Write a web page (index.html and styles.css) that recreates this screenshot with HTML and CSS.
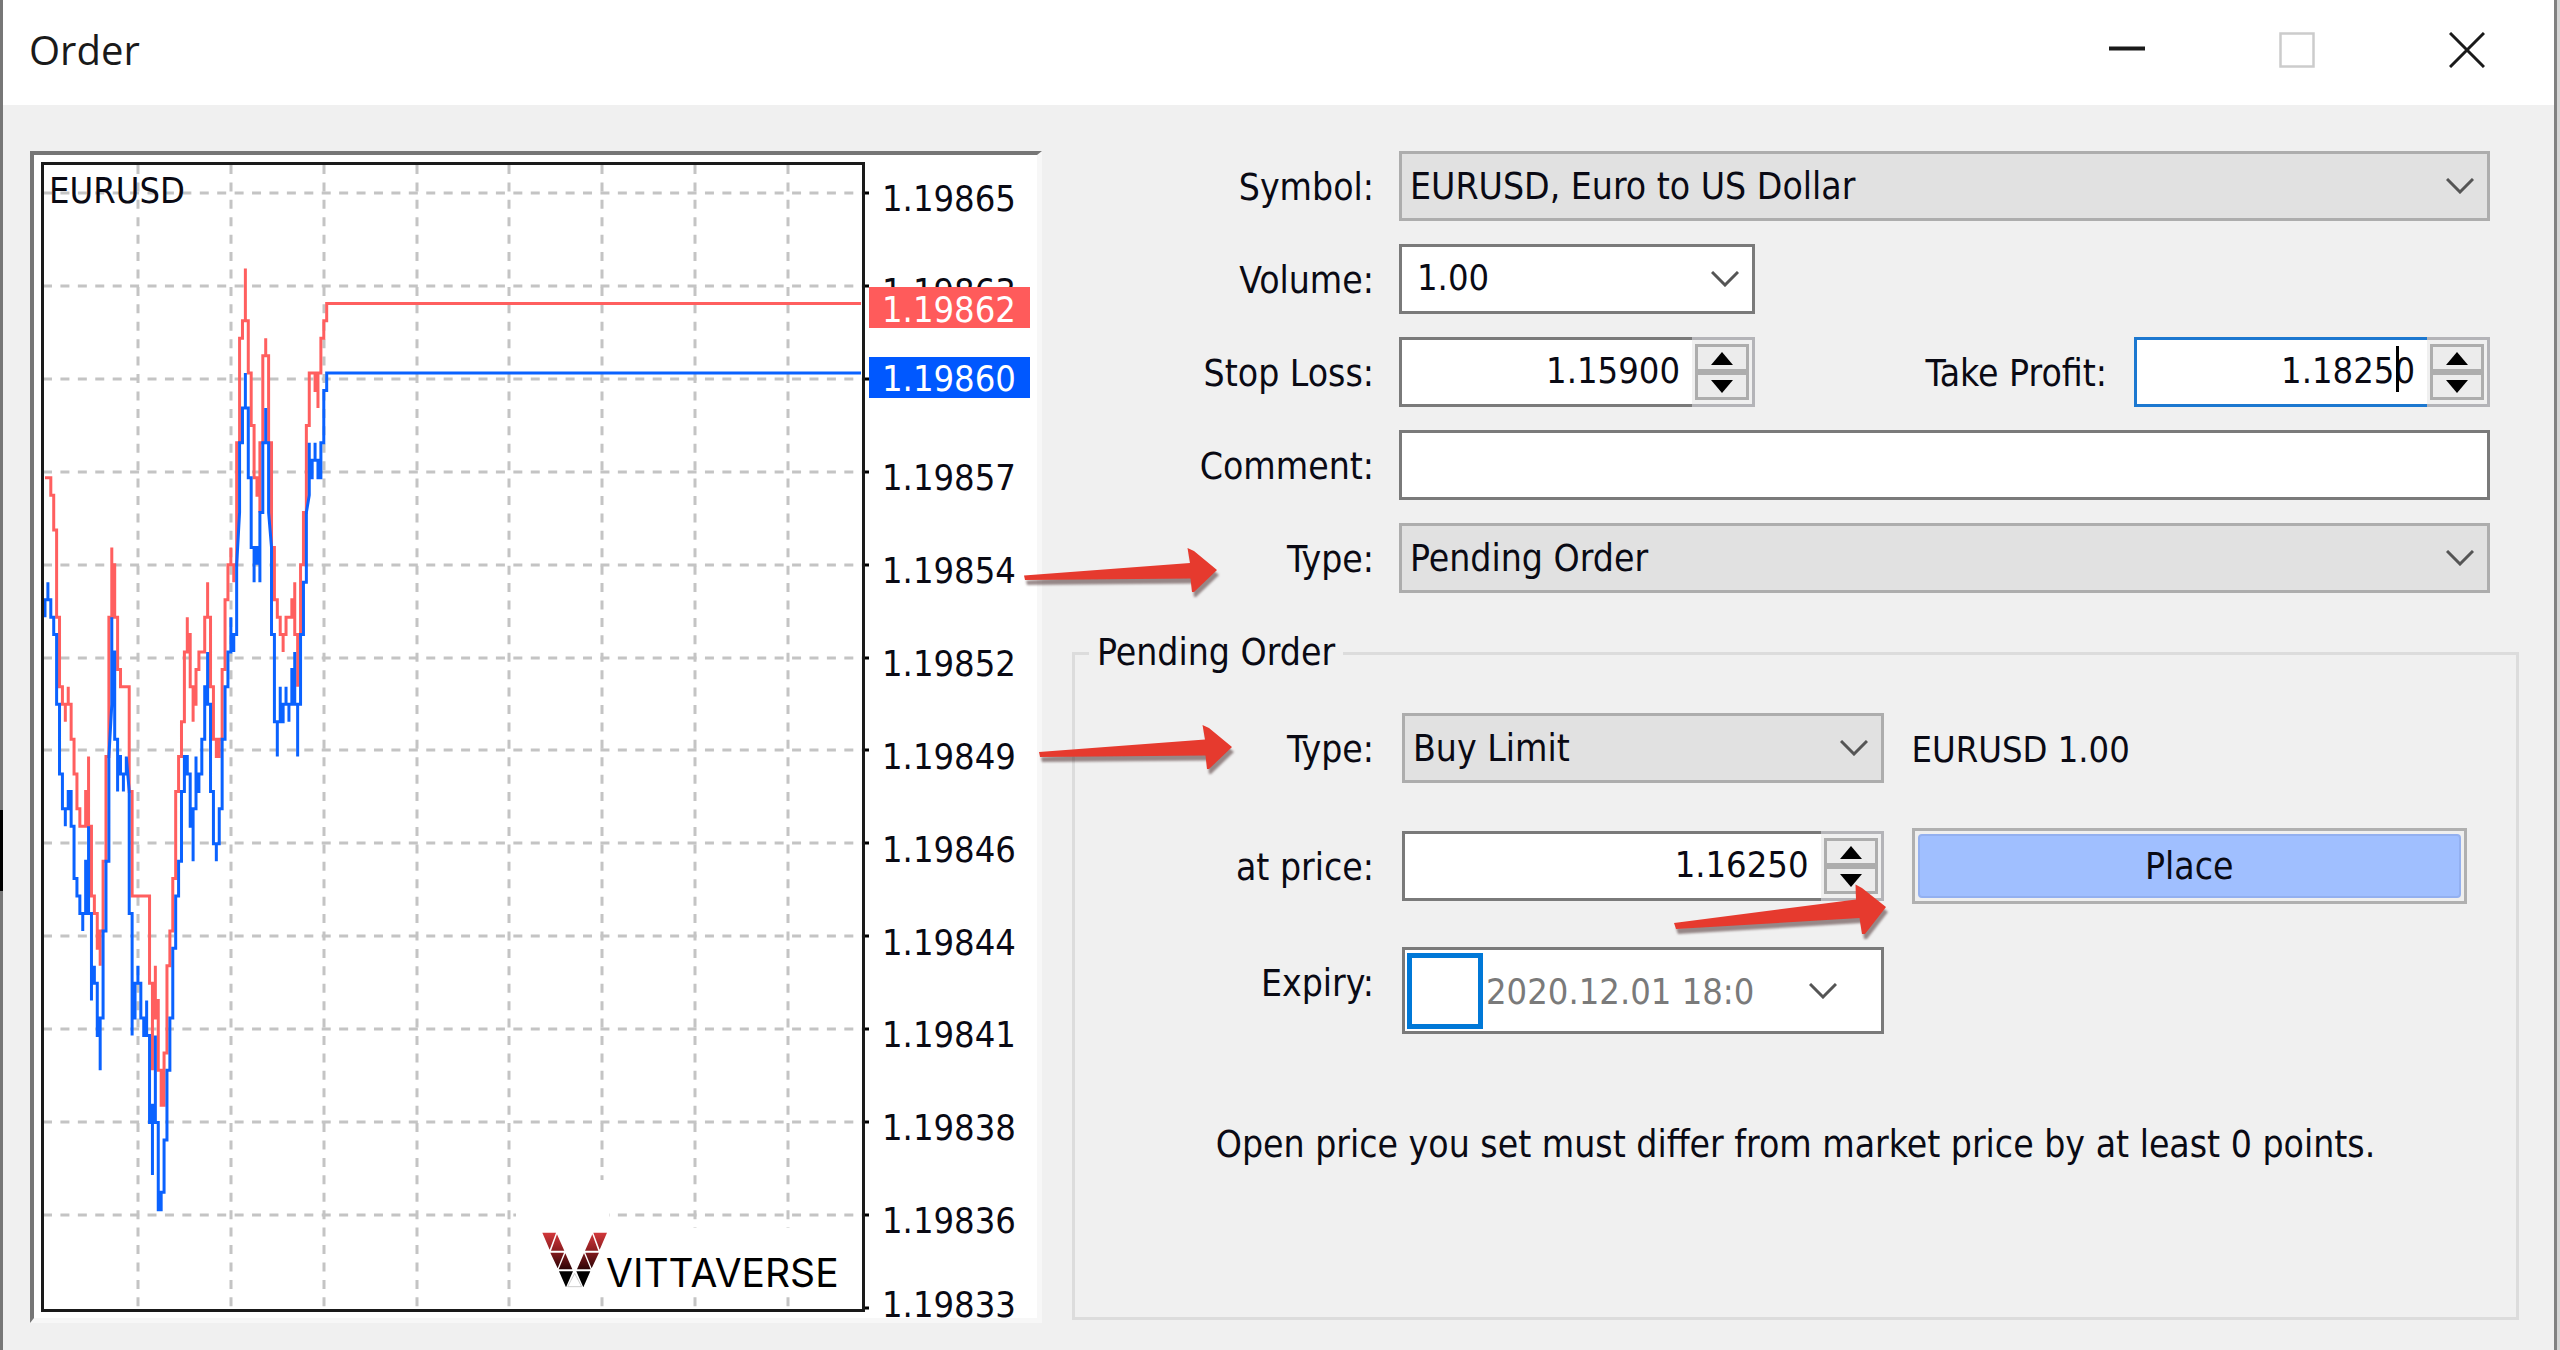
FILE: index.html
```html
<!DOCTYPE html>
<html lang="en">
<head>
<meta charset="utf-8">
<title>Order</title>
<link rel="stylesheet" href="styles.css">
</head>
<body>
<div class="window">
  <header class="titlebar">
    <h1 class="titlebar-text">Order</h1>
    <div class="titlebar-buttons">
      <button class="titlebar-button" type="button" aria-label="Minimize">
        <svg width="36" height="36" viewBox="0 0 36 36"><path d="M0 16.500H36" stroke="#1a1a1a" stroke-width="4"/></svg>
      </button>
      <button class="titlebar-button" type="button" aria-label="Maximize" disabled>
        <svg width="36" height="36" viewBox="0 0 36 36"><rect x="1.500" y="1.500" width="33" height="33" fill="none" stroke="#cccccc" stroke-width="2.500"/></svg>
      </button>
      <button class="titlebar-button" type="button" aria-label="Close">
        <svg width="36" height="36" viewBox="0 0 36 36"><path d="M1 1L35 35M35 1L1 35" stroke="#1a1a1a" stroke-width="3"/></svg>
      </button>
    </div>
  </header>

  <main class="content">
    <section class="chart-panel" aria-label="EURUSD tick chart">
      <svg class="chart" viewBox="34 155 1003 1163">
        <g class="grid-lines">
          <path d="M43 193H863M43 286H863M43 379H863M43 472H863M43 565H863M43 658H863M43 750H863M43 843H863M43 936H863M43 1029H863M43 1122H863M43 1215H863"/>
          <path d="M138 165V1309M231 165V1309M324 165V1309M417 165V1309M509 165V1309M602 165V1309M695 165V1309M788 165V1309"/>
        </g>
        <path d="M516 1180H609V1228H845V1296H516Z" fill="#fff"/>
        <path d="M863 193H869M863 286H869M863 379H869M863 472H869M863 565H869M863 658H869M863 750H869M863 843H869M863 936H869M863 1029H869M863 1122H869M863 1215H869M863 1308H869" stroke="#000" stroke-width="3"/>
        <!-- one x unit per tick, one y unit per half point -->
        <g class="ticks" transform="translate(45 477.700) scale(2.904 17.430)">
          <polyline class="ask" points="0,0 2,0 2,1 3,1 3,3 4,3 4,8 5,8 5,12 6,12 6,13 7,13 7,14 7,13 8,13 8,12 8,13 9,13 9,15 10,15 10,17 11,17 11,19 12,19 12,20 14,20 14,18 15,18 15,16 15,20 16,20 16,24 17,24 17,25 18,25 18,27 19,27 19,28 19,26 20,26 20,22 21,22 21,16 22,16 22,8 23,8 23,4 23,5 24,5 24,8 25,8 25,11 26,11 26,12 29,12 29,18 30,18 30,24 36,24 36,29 37,29 37,34 37,31 38,31 38,28 38,30 39,30 39,34 40,34 40,36 41,36 41,33 42,33 42,28 43,28 43,26 44,26 44,23 45,23 45,18 46,18 46,16 47,16 47,14 48,14 48,10 49,10 49,8 49,9 50,9 50,12 51,12 51,14 51,13 52,13 52,11 53,11 53,10 55,10 55,8 56,8 56,6 56,8 57,8 57,12 58,12 58,15 59,15 59,16 60,16 60,15 61,15 61,11 62,11 62,7 63,7 63,5 64,5 64,4 64,5 65,5 65,6 65,5 66,5 66,-2 67,-2 67,-8 68,-8 68,-9 69,-9 69,-12 69,-9 70,-9 70,-6 71,-6 71,-3 72,-3 72,0 73,0 73,1 74,1 74,2 74,-2 75,-2 75,-7 76,-7 76,-8 76,-7 77,-7 77,-2 78,-2 78,4 79,4 79,7 80,7 80,8 81,8 81,9 82,9 82,10 82,9 83,9 83,8 85,8 85,7 86,7 86,6 86,9 87,9 87,12 87,9 88,9 88,5 89,5 89,2 90,2 90,-3 91,-3 91,-6 93,-6 93,-5 94,-5 94,-4 94,-6 95,-6 95,-8 96,-8 96,-9 97,-9 97,-10 281,-10"/>
          <polyline class="bid" points="0,8 0,7 1,7 1,6 1,7 2,7 2,8 3,8 3,9 4,9 4,13 5,13 5,17 6,17 6,19 7,19 7,20 7,19 8,19 8,18 9,18 9,20 10,20 10,23 11,23 11,24 12,24 12,25 13,25 13,26 13,25 14,25 14,22 15,22 15,20 15,25 16,25 16,30 16,29 17,29 17,28 17,29 18,29 18,32 19,32 19,34 19,31 20,31 20,26 21,26 21,22 22,22 22,16 23,13 23,8 23,10 24,10 24,15 25,15 25,18 25,16 26,16 26,17 27,17 27,18 27,17 28,17 28,16 29,18 29,25 30,25 30,32 30,31 31,31 31,29 32,29 32,28 32,29 33,29 33,31 34,31 34,32 35,32 35,30 35,32 36,32 36,37 37,37 37,40 37,36 38,36 38,32 38,37 39,37 39,42 40,42 40,41 41,41 41,38 42,38 42,34 43,34 43,31 44,31 44,27 45,27 45,24 46,24 46,22 47,22 47,18 48,18 48,16 49,16 49,17 50,17 50,20 51,20 51,22 51,19 52,19 52,16 52,18 53,18 53,17 54,17 54,15 55,15 55,12 56,12 56,10 56,13 57,13 57,18 58,18 58,21 59,21 59,22 59,21 60,21 60,19 61,19 61,15 62,15 62,12 63,12 63,10 64,10 64,8 64,9 65,9 65,10 65,9 66,9 66,5 67,2 67,-2 68,-2 68,-4 69,-4 69,-6 69,-4 70,-4 70,0 71,0 71,4 72,4 72,6 72,4 73,4 73,5 73,4 74,4 74,6 74,2 75,2 75,-2 76,-2 76,-4 76,-2 77,-2 77,2 78,4 78,9 79,9 79,14 80,14 80,16 80,14 81,14 81,12 81,14 82,14 82,13 83,13 83,12 83,13 84,13 84,14 84,13 85,13 85,11 86,11 86,10 86,13 87,13 87,16 87,13 88,13 88,9 89,9 89,6 90,6 90,2 91,1 91,-2 91,0 92,0 92,-1 93,-1 93,-2 93,-1 94,-1 94,0 95,0 95,-2 96,-2 96,-5 97,-5 97,-6 281,-6"/>
        </g>
        <rect x="42.500" y="163.500" width="821" height="1147" fill="none" stroke="#1a1a1a" stroke-width="3"/>
        <g class="chart-text">
          <text x="49" y="203">EURUSD</text>
          <text x="882" y="211">1.19865</text>
          <text x="882" y="304">1.19863</text>
          <text x="882" y="490">1.19857</text>
          <text x="882" y="583">1.19854</text>
          <text x="882" y="676">1.19852</text>
          <text x="882" y="769">1.19849</text>
          <text x="882" y="862">1.19846</text>
          <text x="882" y="955">1.19844</text>
          <text x="882" y="1047">1.19841</text>
          <text x="882" y="1140">1.19838</text>
          <text x="882" y="1233">1.19836</text>
          <text x="882" y="1317">1.19833</text>
          <rect x="869" y="287" width="161" height="41" fill="#ff5b5b"/>
          <text class="tag-text" x="882" y="322">1.19862</text>
          <rect x="869" y="357" width="161" height="41" fill="#0058ff"/>
          <text class="tag-text" x="882" y="391">1.19860</text>
        </g>
        <defs>
          <linearGradient id="brand" gradientUnits="userSpaceOnUse" x1="0" y1="38" x2="0" y2="200">
            <stop offset="0" stop-color="#d2383b"/>
            <stop offset=".33" stop-color="#8c1d20"/>
            <stop offset=".68" stop-color="#2c0406"/>
            <stop offset=".72" stop-color="#000"/>
          </linearGradient>
        </defs>
        <g transform="translate(530 1220) scale(.3333)">
          <path fill="url(#brand)" d="M37 38H78L59 89ZM81 43L103 92H63ZM61 98H102L83 145ZM106 100L127 148H86ZM87 154H129L108 202ZM231 38H190L209 89ZM187 43L165 92H205ZM207 98H166L185 145ZM162 100L141 148H182ZM181 154H139L160 202Z"/>
          <path fill="#fff" stroke="#ccc" stroke-width="3" d="M134 160L113 200H155Z"/>
        </g>
        <text class="brand-text" x="606" y="1287">VITTAVERSE</text>
      </svg>
    </section>

    <form class="order-form">
      <div class="fields">
        <label class="label" for="symbol">Symbol:</label>
        <select class="select" id="symbol"><option>EURUSD, Euro to US Dollar</option></select>

        <label class="label" for="volume">Volume:</label>
        <select class="select select-edit medium" id="volume"><option>1.00</option></select>

        <label class="label" for="stop-loss">Stop Loss:</label>
        <div class="pair">
          <div class="spin medium">
            <input class="spin-input" id="stop-loss" type="text" value="1.15900">
            <div class="spin-buttons">
              <button class="spin-button" type="button" aria-label="Increase stop loss"><svg width="22" height="13" viewBox="0 0 22 13"><path d="M11 0L22 13H0Z"/></svg></button>
              <button class="spin-button" type="button" aria-label="Decrease stop loss"><svg width="22" height="13" viewBox="0 0 22 13"><path d="M0 0H22L11 13Z"/></svg></button>
            </div>
          </div>
          <div class="pair-end">
            <label class="label" for="take-profit">Take Profit:</label>
            <div class="spin spin-focused medium">
              <input class="spin-input" id="take-profit" type="text" value="1.18250">
              <span class="caret"></span>
              <div class="spin-buttons">
                <button class="spin-button" type="button" aria-label="Increase take profit"><svg width="22" height="13" viewBox="0 0 22 13"><path d="M11 0L22 13H0Z"/></svg></button>
                <button class="spin-button" type="button" aria-label="Decrease take profit"><svg width="22" height="13" viewBox="0 0 22 13"><path d="M0 0H22L11 13Z"/></svg></button>
              </div>
            </div>
          </div>
        </div>

        <label class="label" for="comment">Comment:</label>
        <input class="text-input" id="comment" type="text">

        <label class="label" for="type">Type:</label>
        <select class="select" id="type"><option>Pending Order</option></select>
      </div>

      <fieldset class="group">
        <legend class="group-title">Pending Order</legend>
        <div class="group-fields">
          <label class="label" for="pending-type">Type:</label>
          <select class="select" id="pending-type"><option>Buy Limit</option></select>
          <span class="summary">EURUSD 1.00</span>

          <label class="label" for="price">at price:</label>
          <div class="spin">
            <input class="spin-input" id="price" type="text" value="1.16250">
            <div class="spin-buttons">
              <button class="spin-button" type="button" aria-label="Increase price"><svg width="22" height="13" viewBox="0 0 22 13"><path d="M11 0L22 13H0Z"/></svg></button>
              <button class="spin-button" type="button" aria-label="Decrease price"><svg width="22" height="13" viewBox="0 0 22 13"><path d="M0 0H22L11 13Z"/></svg></button>
            </div>
          </div>
          <button class="place" type="submit"><span class="place-face">Place</span></button>

          <label class="label" for="expiry">Expiry:</label>
          <div class="date">
            <input class="date-check" type="checkbox" aria-label="Set expiry">
            <input class="date-input" id="expiry" type="text" value="2020.12.01 18:0">
            <button class="date-button" type="button" aria-label="Open calendar">
              <svg width="28" height="16" viewBox="0 0 28 16"><path d="M1 1L14 14L27 1" fill="none" stroke="#555" stroke-width="3"/></svg>
            </button>
          </div>
        </div>
        <p class="message">Open price you set must differ from market price by at least 0 points.</p>
      </fieldset>
    </form>
  </main>

  <svg class="arrows" viewBox="0 0 2560 1350" preserveAspectRatio="xMinYMin meet" aria-hidden="true">
    <path d="M1024 575.500L1190 563L1187.500 548L1194 551L1217 570L1194 592L1192 592L1190.500 578.500L1025 580Z"/>
    <path d="M1039 752L1205 739.500L1202.500 725L1209 728L1232 747L1209 769L1207 769L1205.500 755.500L1040 757Z"/>
    <path d="M1674 923L1856 899.500L1855.500 884.500L1862 888L1886 907L1865 934L1862 934L1859.500 918L1676 929Z"/>
  </svg>
</div>
</body>
</html>
```
FILE: styles.css
```css
* {
  box-sizing: border-box;
}

body {
  margin: 0;
  font-family: "DejaVu Sans Condensed", "DejaVu Sans", Tahoma, sans-serif;
  font-size: 37px;
  line-height: 46px;
  color: #0a0a14;
  background: #f0f0f0;
}

input,
select,
button {
  font: inherit;
  color: inherit;
}

.window {
  position: relative;
  min-height: 100vh;
  border-left: 3px solid #777777;
  border-right: 3px solid #d4d4d4;
  box-shadow: inset -3px 0 #808080;
  background: #f0f0f0;
}

.window::before {
  content: "";
  position: absolute;
  left: -3px;
  top: 810px;
  width: 3px;
  height: 81px;
  background: #000;
}

/* title bar */
.titlebar {
  display: flex;
  align-items: center;
  justify-content: space-between;
  height: 105px;
  margin-right: 3px;
  padding: 0 0 6px 26px;
  background: #fff;
}

.titlebar-text {
  margin: 0;
  font-family: "Open Sans", "Segoe UI", sans-serif;
  font-size: 40px;
  font-weight: 400;
  line-height: 56px;
  color: #1a1a1a;
}

.titlebar-buttons {
  display: flex;
  padding-right: 2px;
}

.titlebar-button {
  display: flex;
  align-items: center;
  justify-content: center;
  width: 170px;
  height: 99px;
  padding: 0;
  border: 0;
  background: none;
}

/* layout */
.content {
  display: grid;
  grid-template-columns: minmax(0, 1012fr) minmax(0, 1447fr);
  gap: 30px;
  align-items: stretch;
  padding: 46px 38px 20px 27px;
}

.chart-panel {
  align-self: start;
  border: 4px solid #767676;
  border-right: 5px solid #f7f7f7;
  border-bottom: 5px solid #f7f7f7;
  background: #fff;
}

.chart {
  display: block;
  width: 100%;
  height: auto;
  overflow: visible;
}

.grid-lines {
  fill: none;
  stroke: #c4c4c4;
  stroke-width: 3;
  stroke-dasharray: 9 8.420;
}

.ticks {
  fill: none;
}

.ticks polyline {
  stroke-width: 3;
  vector-effect: non-scaling-stroke;
}

.ask {
  stroke: #ff5f5f;
}

.bid {
  stroke: #0a62ff;
}

.chart-text {
  font-size: 36px;
  fill: #0a0a14;
}

.chart-text .tag-text {
  fill: #fff;
}

.brand-text {
  font-family: Inter, sans-serif;
  font-size: 39px;
  fill: #000;
}

/* form */
.order-form {
  display: flex;
  flex-direction: column;
  gap: 37px;
  padding-bottom: 3px;
}

.fields {
  display: grid;
  grid-template-columns: 302px minmax(0, 1fr);
  column-gap: 25px;
  row-gap: 23px;
  padding-right: 29px;
}

.label {
  height: 70px;
  padding-top: 2px;
  line-height: 70px;
  text-align: right;
  white-space: nowrap;
}

.select,
.text-input {
  width: 100%;
  height: 70px;
  border: 3px solid #adadad;
  border-radius: 0;
  outline: none;
}

.select {
  appearance: none;
  padding: 2px 60px 0 8px;
  background: #e1e1e1 url("data:image/svg+xml,%3Csvg xmlns='http://www.w3.org/2000/svg' width='28' height='16' viewBox='0 0 28 16'%3E%3Cpath d='M1 1L14 14L27 1' fill='none' stroke='%23555' stroke-width='3'/%3E%3C/svg%3E") no-repeat right 13px center;
}

.select-edit {
  padding: 0 60px 2px 15px;
  border-color: #7a7a7a;
  font-size: 36px;
  background-color: #fff;
}

.text-input {
  padding: 0 12px;
  border-color: #7a7a7a;
  background: #fff;
}

.medium {
  width: 356px;
}

.pair {
  display: flex;
  justify-content: space-between;
}

.pair-end {
  display: flex;
  gap: 27px;
}

.spin {
  position: relative;
  display: flex;
  height: 70px;
}

.spin-input {
  flex: 1;
  min-width: 0;
  padding: 0 12px 2px 12px;
  border: 3px solid #7a7a7a;
  border-right: 0;
  outline: none;
  font-size: 36px;
  text-align: right;
  background: #fff;
}

.spin-focused .spin-input {
  border-color: #1c78d0;
}

.caret {
  position: absolute;
  right: 91px;
  top: 9px;
  width: 3px;
  height: 46px;
  background: #000;
}

.spin-buttons {
  display: grid;
  grid-template-rows: 1fr 1fr;
  width: 63px;
  padding: 4px 3px;
  border: 3px solid #b4b4b8;
  border-left: 0;
}

.spin-button {
  display: flex;
  align-items: center;
  justify-content: center;
  padding: 0;
  border: 3px solid #adadad;
  background: #ececec;
}

/* pending order group */
.group {
  flex: 1;
  min-width: 0;
  margin: 0;
  padding: 37px 49px 0 0;
  border: 3px solid #dcdcdc;
}

.group-title {
  margin-left: 14px;
  padding: 0 8px;
}

.group-fields {
  display: grid;
  grid-template-columns: 299px minmax(0, 482fr) minmax(0, 556fr);
  column-gap: 28px;
  row-gap: 46px;
}

.summary {
  padding-top: 2px;
  font-size: 36px;
  line-height: 70px;
}

.place {
  height: 76px;
  margin: -3px 0;
  padding: 3px;
  border: 3px solid #b0b0b0;
  background: #efefef;
}

.place-face {
  display: block;
  height: 64px;
  border: 2px solid #93b0f0;
  border-radius: 4px;
  line-height: 62px;
  background: #a0bfff;
}

.date {
  display: flex;
  align-items: center;
  height: 87px;
  padding: 0 44px 0 2px;
  border: 3px solid #7a7a7a;
  background: #fff;
}

.date-check {
  appearance: none;
  flex: none;
  width: 76px;
  height: 76px;
  margin: 0;
  border: 5px solid #0078d7;
  background: #fff;
}

.date-input {
  flex: 1;
  min-width: 0;
  padding: 2px 0 0 3px;
  border: 0;
  outline: none;
  font-size: 36px;
  color: #7a7a7a;
  background: none;
}

.date-button {
  display: flex;
  padding: 0;
  border: 0;
  background: none;
}

.message {
  margin: 88px -49px 0 0;
  text-align: center;
}

/* callout arrows lying over the form */
.arrows {
  position: absolute;
  left: -3px;
  top: 0;
  width: 100vw;
  pointer-events: none;
  fill: #e63a2e;
  filter: drop-shadow(2px 5px 1px rgba(60, 30, 30, .5));
}
```
